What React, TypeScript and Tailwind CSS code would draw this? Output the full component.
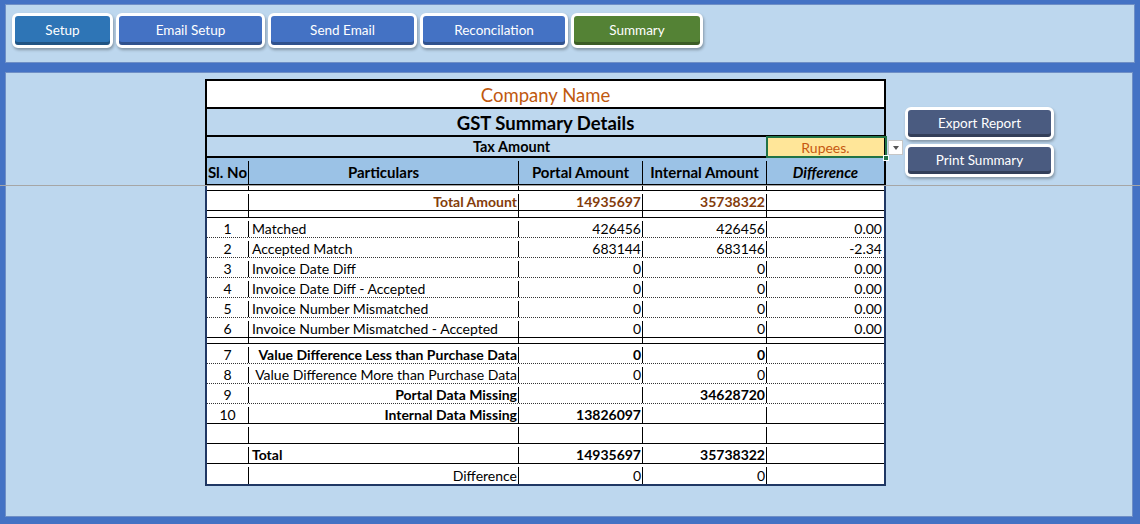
import React from 'react';

const NAV = [
  { label: 'Setup', w: 'w-[101px]', color: 'bg-[#2E75B6]' },
  { label: 'Email Setup', w: 'w-[149px]', color: 'bg-[#4472C4]' },
  { label: 'Send Email', w: 'w-[149px]', color: 'bg-[#4472C4]' },
  { label: 'Reconcilation', w: 'w-[148px]', color: 'bg-[#4472C4]' },
  { label: 'Summary', w: 'w-[132px]', color: 'bg-[#548235]' },
];

const MAIN_ROWS = [
  { no: '1', label: 'Matched', portal: '426456', internal: '426456', diff: '0.00' },
  { no: '2', label: 'Accepted Match', portal: '683144', internal: '683146', diff: '-2.34' },
  { no: '3', label: 'Invoice Date Diff', portal: '0', internal: '0', diff: '0.00' },
  { no: '4', label: 'Invoice Date Diff - Accepted', portal: '0', internal: '0', diff: '0.00' },
  { no: '5', label: 'Invoice Number Mismatched', portal: '0', internal: '0', diff: '0.00' },
  { no: '6', label: 'Invoice Number Mismatched - Accepted', portal: '0', internal: '0', diff: '0.00' },
];

const GRID = 'grid grid-cols-[42px_270px_124px_124px_117px]';
const CELL = 'border-r border-black flex items-center';
const DOTTED = 'border-b border-dotted border-[#333]';

type RowProps = {
  no?: string;
  label?: string;
  portal?: string;
  internal?: string;
  diff?: string;
  labelAlign?: 'left' | 'right';
  labelBold?: boolean;
  portalBold?: boolean;
  internalBold?: boolean;
  border?: string;
  h?: string;
  tone?: string;
};

function Row({
  no = '',
  label = '',
  portal = '',
  internal = '',
  diff = '',
  labelAlign = 'left',
  labelBold = false,
  portalBold = false,
  internalBold = false,
  border = 'border-b border-black',
  h = 'h-[20px] pt-[3px]',
  tone = 'text-black',
}: RowProps) {
  return (
    <div className={`${GRID} ${h} ${border} ${tone} bg-white`}>
      <div className={`${CELL} justify-center`}>{no}</div>
      <div
        className={`${CELL} whitespace-nowrap ${labelAlign === 'right' ? 'justify-end pr-[1px]' : 'pl-[3px]'} ${labelBold ? 'font-bold' : ''}`}
      >
        {label}
      </div>
      <div className={`${CELL} justify-end pr-[1px] ${portalBold ? 'font-bold' : ''}`}>{portal}</div>
      <div className={`${CELL} justify-end pr-[1px] ${internalBold ? 'font-bold' : ''}`}>{internal}</div>
      <div className="flex items-center justify-end pr-[2px]">{diff}</div>
    </div>
  );
}

function Spacer({ h }: { h: string }) {
  return <Row h={h} />;
}

export default function App() {
  return (
    <div className="relative w-[1140px] h-[524px] overflow-hidden bg-[#4472C4] pt-[4px] px-[5px] font-[Lato,'Liberation_Sans',sans-serif] text-[14px] leading-none">
      {/* Top nav panel */}
      <div className="h-[59px] w-[1130px] bg-[#BDD7EE] border border-[#6f8fc6] flex items-start gap-[3px] pl-[6px] pt-[8px]">
        {NAV.map((b) => (
          <div
            key={b.label}
            className={`${b.w} h-[35px] rounded-[6px] border-[3px] border-white bg-white shadow-[1px_2px_3px_rgba(0,0,0,0.3)]`}
          >
            <div
              className={`h-full w-full rounded-[3px] ${b.color} shadow-[inset_0_-3px_0_rgba(0,0,0,0.28)] flex items-center justify-center text-white text-[13.5px] pt-[1px]`}
            >
              {b.label}
            </div>
          </div>
        ))}
      </div>

      {/* Sheet panel */}
      <div className="mt-[9px] h-[445px] w-[1128px] bg-[#BDD7EE] border border-[#6f8fc6] flex items-start">
        <div className="ml-[199px] mt-[6px] w-[681px]">
          {/* Header block */}
          <div className="border-x-2 border-t-2 border-black">
            <div className="h-[28px] border-b-2 border-black bg-white flex items-center justify-center pt-[2px] text-[18.5px] text-[#C0590F]">
              Company Name
            </div>
            <div className="h-[28px] border-b-2 border-black bg-[#BDD7EE] flex items-center justify-center pt-[2px] text-[18.5px] font-bold">
              GST Summary Details
            </div>
            <div className="h-[21px] border-b-2 border-black bg-[#BDD7EE] grid grid-cols-[560px_117px]">
              <div className="border-r border-black flex items-center justify-center pl-[50px] pt-[2px] font-bold text-[14.5px]">
                Tax Amount
              </div>
              <div className="relative bg-[#FFE699] flex items-center justify-center pt-[2px] text-[#C65911]">
                Rupees.
                <div className="absolute -left-[1px] -top-[1px] -right-[3px] -bottom-[2px] border-2 border-[#217346]" />
                <div className="absolute -right-[5px] -bottom-[5px] w-[6px] h-[6px] bg-[#217346] border border-white" />
                <div className="absolute left-[121px] top-[3px] w-[15px] h-[15px] bg-white border border-[#c6c6c6] flex items-center justify-center">
                  <div className="w-0 h-0 border-x-[3px] border-x-transparent border-t-[4px] border-t-[#555]" />
                </div>
              </div>
            </div>
            <div className={`${GRID} h-[27px] pt-[3px] border-b border-black bg-[#9BC2E6] font-bold text-[15px]`}>
              <div className={`${CELL} pl-[1px]`}>Sl. No</div>
              <div className={`${CELL} justify-center`}>Particulars</div>
              <div className={`${CELL} justify-center`}>Portal Amount</div>
              <div className={`${CELL} justify-center`}>Internal Amount</div>
              <div className="flex items-center justify-center italic">Difference</div>
            </div>
          </div>

          {/* Body */}
          <div className="border-x-2 border-b-2 border-x-[#203864] border-b-[#203864]">
            <Spacer h="h-[6px]" />
            <Row
              label="Total Amount"
              labelAlign="right"
              labelBold
              portal="14935697"
              internal="35738322"
              portalBold
              internalBold
              tone="text-[#833C0B]"
            />
            <Spacer h="h-[7px]" />
            {MAIN_ROWS.map((r, i) => (
              <Row key={r.no} {...r} border={i === MAIN_ROWS.length - 1 ? 'border-b border-black' : DOTTED} />
            ))}
            <Spacer h="h-[6px]" />
            <Row
              no="7"
              label="Value Difference Less than Purchase Data"
              labelAlign="right"
              labelBold
              portal="0"
              internal="0"
              portalBold
              internalBold
              border={DOTTED}
            />
            <Row
              no="8"
              label="Value Difference More than Purchase Data"
              labelAlign="right"
              portal="0"
              internal="0"
              border={DOTTED}
            />
            <Row
              no="9"
              label="Portal Data Missing"
              labelAlign="right"
              labelBold
              internal="34628720"
              internalBold
              border={DOTTED}
            />
            <Row no="10" label="Internal Data Missing" labelAlign="right" labelBold portal="13826097" portalBold />
            <Row />
            <Row label="Total" labelBold portal="14935697" internal="35738322" portalBold internalBold />
            <Row label="Difference" labelAlign="right" portal="0" internal="0" border="" />
          </div>
        </div>

        {/* Action buttons */}
        <div className="ml-[19px] mt-[34px] flex flex-col gap-[4px]">
          {['Export Report', 'Print Summary'].map((t) => (
            <div
              key={t}
              className="w-[149px] h-[33px] rounded-[6px] border-[3px] border-white bg-white shadow-[1px_2px_3px_rgba(0,0,0,0.3)]"
            >
              <div className="h-full w-full rounded-[3px] bg-[#4A5B80] shadow-[inset_0_-3px_0_rgba(0,0,0,0.3)] flex items-center justify-center text-white text-[13.5px] pt-[1px]">
                {t}
              </div>
            </div>
          ))}
        </div>
      </div>

      {/* Freeze pane line */}
      <div className="absolute left-0 right-0 top-[185px] h-px bg-[#a6a6a6]" />
    </div>
  );
}
